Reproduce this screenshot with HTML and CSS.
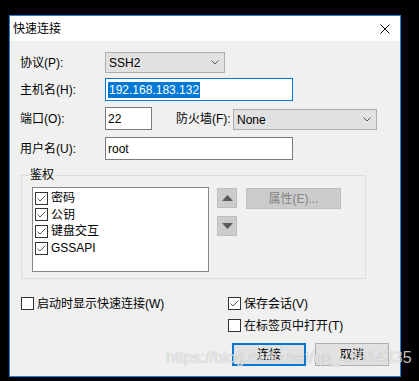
FILE: index.html
```html
<!DOCTYPE html>
<html>
  <head>
    <title>快速连接</title>
    <link rel="stylesheet" href="styles.css">
  </head>
  <body>
    <div class="dialog">
      <div class="titlebar">
        <span class="title">快速连接</span>
        <svg class="close" width="10" height="10" viewBox="0 0 10 10">
          <path d="M0.5 0.5 L9.5 9.5 M9.5 0.5 L0.5 9.5" stroke="#000" stroke-width="1" fill="none" />
        </svg>
      </div>

      <div class="content">
        <div class="row row-proto">
          <span class="lbl">协议(P):</span>
          <div class="combo combo-proto">
            <span>SSH2</span>
            <svg class="chevron" width="8" height="5" viewBox="0 0 8 5">
              <polyline points="0.5,0.5 4,4 7.5,0.5" stroke="#555" fill="none" />
            </svg>
          </div>
        </div>

        <div class="row row-host">
          <span class="lbl">主机名(H):</span>
          <div class="field field-host"><span class="selected">192.168.183.132</span></div>
        </div>

        <div class="row row-port">
          <span class="lbl">端口(O):</span>
          <div class="field field-port">22</div>
          <span class="lbl-fw">防火墙(F):</span>
          <div class="combo combo-fw">
            <span>None</span>
            <svg class="chevron" width="8" height="5" viewBox="0 0 8 5">
              <polyline points="0.5,0.5 4,4 7.5,0.5" stroke="#555" fill="none" />
            </svg>
          </div>
        </div>

        <div class="row row-user">
          <span class="lbl">用户名(U):</span>
          <div class="field field-user">root</div>
        </div>

        <fieldset class="auth">
          <legend>鉴权</legend>
          <div class="auth-inner">
            <div class="listbox">
              <div class="item"><span class="cb checked"><svg width="11" height="11" viewBox="0 0 11 11"><polyline points="1.5,5.5 4,8 9.5,2.5" stroke="#5f5f5f" fill="none" /></svg></span>密码</div>
              <div class="item"><span class="cb checked"><svg width="11" height="11" viewBox="0 0 11 11"><polyline points="1.5,5.5 4,8 9.5,2.5" stroke="#5f5f5f" fill="none" /></svg></span>公钥</div>
              <div class="item"><span class="cb checked"><svg width="11" height="11" viewBox="0 0 11 11"><polyline points="1.5,5.5 4,8 9.5,2.5" stroke="#5f5f5f" fill="none" /></svg></span>键盘交互</div>
              <div class="item"><span class="cb checked"><svg width="11" height="11" viewBox="0 0 11 11"><polyline points="1.5,5.5 4,8 9.5,2.5" stroke="#5f5f5f" fill="none" /></svg></span>GSSAPI</div>
            </div>
            <div class="arrows">
              <div class="arrow-btn">
                <svg width="11" height="6" viewBox="0 0 11 6"><polygon points="5.5,0 11,6 0,6" fill="#5a5a5a" /></svg>
              </div>
              <div class="arrow-btn">
                <svg width="11" height="6" viewBox="0 0 11 6"><polygon points="0,0 11,0 5.5,6" fill="#5a5a5a" /></svg>
              </div>
            </div>
            <div class="button button-disabled">属性(E)...</div>
          </div>
        </fieldset>

        <div class="options">
          <div class="opt-col">
            <div class="opt"><span class="cb"></span>启动时显示快速连接(W)</div>
          </div>
          <div class="opt-col opt-right">
            <div class="opt"><span class="cb checked"><svg width="11" height="11" viewBox="0 0 11 11"><polyline points="1.5,5.5 4,8 9.5,2.5" stroke="#5f5f5f" fill="none" /></svg></span>保存会话(V)</div>
            <div class="opt"><span class="cb"></span>在标签页中打开(T)</div>
          </div>
        </div>

        <div class="actions">
          <div class="button button-default">连接</div>
          <div class="button">取消</div>
        </div>
      </div>
    </div>

    <div class="watermark">https://blog.csdn.net/qq_43514335</div>
  </body>
</html>
```

FILE: styles.css
```css
* {
  box-sizing: border-box;
}

body {
  margin: 0;
  height: 381px;
  overflow: hidden;
  position: relative;
  background-color: #000;
  color: #000;
  font-family: "Liberation Sans", "Noto Sans CJK SC", sans-serif;
  font-size: 12px;
  line-height: 14px;
}

.dialog {
  margin: 15px 0 0 9px;
  width: 392px;
  height: 362px;
  border: 1px solid #1883d7;
  background-color: #f0f0f0;
  display: flex;
  flex-direction: column;
}

.titlebar {
  height: 25px;
  background-color: #fff;
  display: flex;
  align-items: center;
  justify-content: space-between;
  padding: 0 10px 0 3px;
}

.content {
  flex: 1;
  padding-top: 11px;
}

.row {
  display: flex;
  align-items: center;
  padding-left: 10px;
  height: 23px;
}

.row-proto {
  height: 21px;
  margin-bottom: 5px;
}

.row-host {
  margin-bottom: 6px;
}

.row-port {
  margin-bottom: 7px;
}

.lbl {
  width: 85px;
}

.lbl-fw {
  width: 57px;
  margin-left: 24px;
}

.combo {
  height: 21px;
  background-color: #e1e1e1;
  border: 1px solid #adadad;
  display: flex;
  align-items: center;
  justify-content: space-between;
  padding: 0 5px 0 3px;
}

.combo-proto {
  width: 120px;
}

.combo-fw {
  width: 144px;
  align-self: flex-end;
}

.field {
  height: 23px;
  background-color: #fff;
  border: 1px solid #7a7a7a;
  display: flex;
  align-items: center;
  padding-left: 2px;
}

.field-host {
  width: 188px;
  border-color: #0078d7;
}

.field-port {
  width: 47px;
}

.field-user {
  width: 188px;
}

.selected {
  background-color: #0078d7;
  color: #fff;
  line-height: 16px;
  padding: 0 1px;
}

.auth {
  margin: 8px 0 0 11px;
  width: 345px;
  padding: 5px 0 6px 10px;
  border: 1px solid #dcdcdc;
  min-inline-size: 0;
}

.auth legend {
  padding: 0 1px;
  margin-left: -3px;
  line-height: 14px;
}

.auth-inner {
  display: flex;
  align-items: flex-start;
}

.listbox {
  width: 177px;
  height: 85px;
  background-color: #fff;
  border: 1px solid #828790;
  padding: 2px 0 0 2px;
}

.item {
  height: 16.6px;
  display: flex;
  align-items: center;
  gap: 3px;
}

.cb {
  width: 13px;
  height: 13px;
  border: 1px solid #333;
  background-color: #fff;
  display: inline-flex;
  flex-shrink: 0;
}

.arrows {
  display: flex;
  flex-direction: column;
  gap: 8px;
  margin: 1px 0 0 8px;
}

.arrow-btn {
  width: 20px;
  height: 20px;
  background-color: #cccccc;
  border: 1px solid #bfbfbf;
  display: flex;
  align-items: center;
  justify-content: center;
}

.button {
  width: 74px;
  height: 23px;
  background-color: #e1e1e1;
  border: 1px solid #adadad;
  display: flex;
  align-items: center;
  justify-content: center;
}

.button-default {
  border: 2px solid #0078d7;
}

.button-disabled {
  width: 95px;
  height: 21px;
  margin: 1px 0 0 9px;
  background-color: #cccccc;
  border-color: #bfbfbf;
  color: #838383;
}

.options {
  margin-top: 18px;
  padding-left: 11px;
  display: grid;
  grid-template-columns: 207px 1fr;
}

.opt-right {
  display: flex;
  flex-direction: column;
  gap: 9px;
}

.opt {
  height: 13px;
  display: flex;
  align-items: center;
  gap: 3px;
}

.actions {
  margin-top: 11px;
  padding-right: 11px;
  display: flex;
  justify-content: flex-end;
  gap: 9px;
}

.watermark {
  position: absolute;
  left: 166px;
  top: 349px;
  font-size: 16px;
  line-height: 18px;
  color: rgba(255, 255, 255, 0.75);
  text-shadow: 0 0 1px rgba(0, 0, 0, 0.35);
  white-space: nowrap;
}
```
